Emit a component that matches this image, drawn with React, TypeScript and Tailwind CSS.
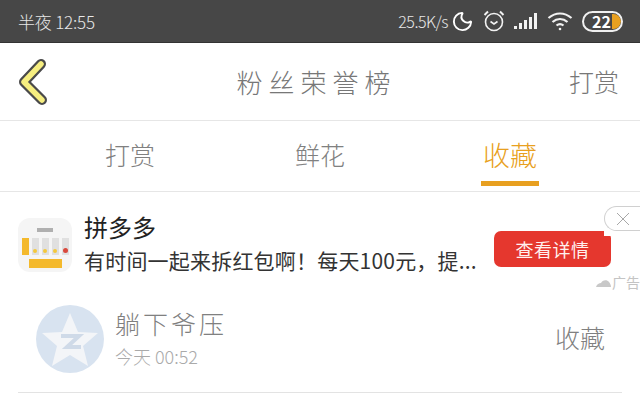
import { Moon } from 'lucide-react'

const cjk = { fontFamily: '"Noto Sans CJK SC", "Noto Sans", sans-serif' }

function StatusBar() {
  return (
    <div className="flex h-[43px] items-center justify-between border-b border-[#333333] bg-[#474747] pl-[18px] pr-[17px] text-[#e8e8e8]">
      <span className="text-[17px] font-light leading-none tracking-[-0.2px]">半夜 12:55</span>
      <div className="flex items-center">
        <span className="text-[16px] font-light leading-none tracking-[-0.5px]">25.5K/s</span>
        <Moon size={23} strokeWidth={2} className="ml-[3px] text-white" />
        <svg width="24" height="24" viewBox="0 0 24 24" fill="none" stroke="#f2f2f2" strokeWidth="1.6" className="ml-[8px]">
          <circle cx="12" cy="13" r="8.5" />
          <path d="M8.5 12.5l3.5 2.5 3.5-2.5" />
          <path d="M2.5 6l3.5-3.5M21.5 6L18 2.5" strokeWidth="2" />
        </svg>
        <svg width="26" height="20" viewBox="0 0 26 20" fill="#f2f2f2" className="ml-[7px]">
          <rect x="1" y="15" width="3" height="3" />
          <rect x="6" y="12" width="3" height="6" />
          <rect x="11" y="9" width="3" height="9" />
          <rect x="16" y="6" width="3" height="12" />
          <rect x="21" y="2" width="3" height="16" />
        </svg>
        <svg width="26" height="20" viewBox="0 0 26 20" fill="none" stroke="#f2f2f2" strokeWidth="2.2" className="ml-[8px]">
          <path d="M1.5 7c7-6 16-6 23 0" />
          <path d="M5.5 11c4.500-4 10.500-4 15 0" />
          <path d="M9.500 14.500c2.200-1.800 4.800-1.800 7 0" />
          <circle cx="13" cy="18" r="1.300" fill="#f2f2f2" stroke="none" />
        </svg>
        <div className="relative ml-[9px] flex h-[21px] w-[41px] items-center overflow-hidden rounded-full border-2 border-[#f0f0f0]">
          <span className="ml-[8px] text-[16px] font-bold leading-none text-white">22</span>
          <div className="ml-[1px] h-[15px] w-[9px] rounded-r-full bg-[#e8a020]" />
        </div>
      </div>
    </div>
  )
}

function Header() {
  return (
    <div className="relative flex h-[78px] items-center justify-between border-b border-[#e6e6e6] pl-[18px] pr-[21px]">
      <svg width="30" height="46" viewBox="0 0 30 46" fill="none">
        <path d="M23 5L6 23l18 18" stroke="#4a4a4a" strokeWidth="10" strokeLinecap="round" strokeLinejoin="round" />
        <path d="M23 5L6 23l18 18" stroke="#f6ee80" strokeWidth="5.500" strokeLinecap="round" strokeLinejoin="round" />
      </svg>
      <h1 className="ml-[16px] text-[26px] font-light leading-none tracking-[6px] text-[#777777]" style={cjk}>粉丝荣誉榜</h1>
      <span className="text-[25px] font-light leading-none text-[#777777]" style={cjk}>打赏</span>
    </div>
  )
}

function Tabs() {
  const tabs = ['打赏', '鲜花', '收藏']
  return (
    <div className="grid h-[71px] grid-cols-3 border-b border-[#e6e6e6] px-[35px]">
      {tabs.map((tab, index) => {
        const active = index === 2
        return (
          <div key={tab} className="flex flex-col items-center">
            <div className="flex h-[60px] items-center pt-[6px]">
              <span className={active ? 'text-[27px] font-light leading-none text-[#e8a020]' : 'text-[25px] font-light leading-none text-[#808080]'} style={cjk}>
                {tab}
              </span>
            </div>
            {active && <div className="h-[5px] w-[58px] bg-[#e8a020]" />}
          </div>
        )
      })}
    </div>
  )
}

function AppIcon() {
  const cells = [0, 1, 2, 3, 4]
  return (
    <div className="flex h-[54px] w-[54px] shrink-0 flex-col items-center rounded-[12px] bg-[#f5f5f5] pt-[10px]">
      <div className="h-[4px] w-[16px] bg-[#b0b0b0]" />
      <div className="mt-[6px] flex gap-[3px]">
        {cells.map((cell) => (
          <div key={cell} className={cell === 0 ? 'flex h-[17px] w-[7px] items-end justify-center bg-[#f4b92c] pb-[2px]' : 'flex h-[17px] w-[7px] items-end justify-center bg-[#e0e0e0] pb-[2px]'}>
            {cell > 0 && <div className={cell === 4 ? 'h-[5px] w-[5px] rounded-full bg-[#d9483b]' : 'h-[4px] w-[4px] rounded-full bg-[#f4c83c]'} />}
          </div>
        ))}
      </div>
      <div className="mt-[4px] h-[9px] w-[33px] bg-[#f4b92c]" />
    </div>
  )
}

function Ad() {
  return (
    <div className="relative flex h-[100px] pl-[18px] pt-[26px]">
      <AppIcon />
      <div className="ml-[12px] w-[400px]" style={cjk}>
        <div className="mt-[-7px] text-[24px] leading-[32px] text-[#222222]">拼多多</div>
        <div className="mt-[2px] whitespace-nowrap text-[21px] leading-[31px] tracking-[0.2px] text-[#333333]">有时间一起来拆红包啊！每天100元，提...</div>
      </div>
      <button className="absolute left-[494px] top-[39px] flex h-[36px] w-[117px] items-center justify-center rounded-[7px] bg-[#e5372e] text-[18px] tracking-[0.5px] text-[#fff0ee]" style={cjk}>
        查看详情
        <span className="absolute right-0 top-0 h-[5px] w-[7px] bg-white" />
      </button>
      <div className="absolute left-[604px] top-[14px] flex h-[25px] w-[36px] items-center justify-center rounded-l-full border border-r-0 border-[#d0d0d0] bg-white">
        <svg width="14" height="14" viewBox="0 0 14 14" stroke="#a8a8a8" strokeWidth="1">
          <path d="M1 1l12 12M13 1L1 13" />
        </svg>
      </div>
      <div className="absolute left-[596px] top-[83px] flex items-center text-[14px] leading-none text-[#c4c4c4]" style={cjk}>
        <svg width="16" height="9" viewBox="0 0 16 9" fill="#c8c8c8">
          <path d="M0 9c1-3 3-4 5-4 1-3 6-4 8-1 1 1 2 3 2 5z" />
        </svg>
        <span>广告</span>
      </div>
    </div>
  )
}

function Avatar() {
  return (
    <svg width="68" height="68" viewBox="0 0 68 68" className="shrink-0">
      <circle cx="34" cy="34" r="34" fill="#d8e3f0" />
      <path d="M34 8l8 19 20 1-15 13 5 20-18-11-18 11 5-20L6 28l20-1z" fill="#f3f5f8" />
      <path d="M25 31h18l-12 11h14" fill="none" stroke="#cfdae8" strokeWidth="4" />
    </svg>
  )
}

function Row() {
  return (
    <div className="mx-[18px] flex h-[101px] items-center border-b border-[#e3e3e3] pb-[6px] pl-[18px] pr-[17px]">
      <Avatar />
      <div className="ml-[11px] flex-1" style={cjk}>
        <div className="mt-[-4px] text-[25px] font-light leading-[32px] tracking-[3px] text-[#808080]">躺下爷压</div>
        <div className="mt-[5px] text-[18px] font-light leading-[24px] text-[#aaaaaa]">今天 00:52</div>
      </div>
      <span className="mt-[-3px] text-[25px] font-light leading-none text-[#808080]" style={cjk}>收藏</span>
    </div>
  )
}

export default function App() {
  return (
    <div className="h-[404px] w-[640px] overflow-hidden bg-white" style={cjk}>
      <StatusBar />
      <Header />
      <Tabs />
      <Ad />
      <Row />
    </div>
  )
}
